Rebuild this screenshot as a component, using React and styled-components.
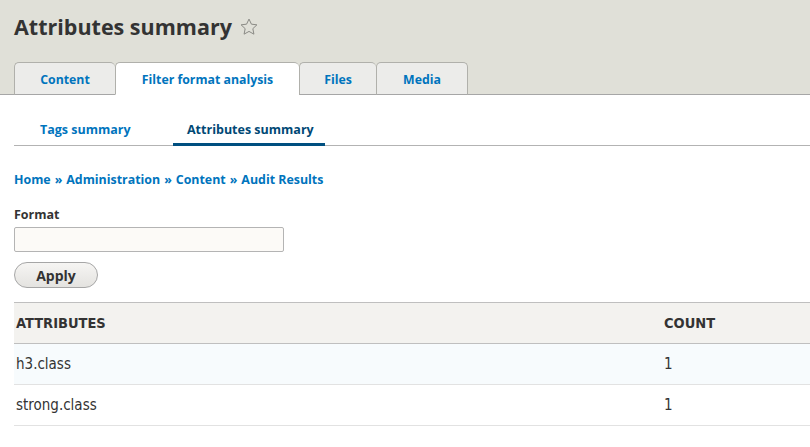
import React from 'react';
import styled, { createGlobalStyle } from 'styled-components';

const GlobalStyle = createGlobalStyle`
  html, body {
    margin: 0;
    padding: 0;
    background: #fff;
  }
  body {
    font-family: "Open Sans", "DejaVu Sans", sans-serif;
    color: #333;
    overflow: hidden;
  }
`;

const Header = styled.div`
  background: #e0e0d8;
  padding: 11px 14px 0;
  border-bottom: 1px solid #a6a6a6;
`;

const Title = styled.h1`
  margin: 0;
  font-size: 21.5px;
  font-weight: bold;
  color: #333;
  display: flex;
  align-items: center;
  gap: 7px;
  height: 30px;
`;

const Star = styled.svg`
  width: 20px;
  height: 20px;
  margin-top: 1px;
`;

const Tabs = styled.ul`
  display: flex;
  list-style: none;
  margin: 21px 0 0;
  padding: 0;
`;

const Tab = styled.li`
  box-sizing: border-box;
  width: ${(p) => p.w}px;
  height: 33px;
  margin-bottom: -1px;
  display: flex;
  align-items: center;
  justify-content: center;
  font-size: 12.3px;
  font-weight: bold;
  color: #0074bd;
  background: ${(p) => (p.active ? '#fff' : '#ececea')};
  border: 1px solid #b0b0ab;
  border-bottom: ${(p) => (p.active ? '1px solid #fff' : '1px solid #a6a6a6')};
  border-right: ${(p) => (p.last ? '1px solid #b0b0ab' : 'none')};
  border-radius: 5px 5px 0 0;
  padding-top: 1px;
`;

const Content = styled.div`
  padding: 0 0 0 14px;
`;

const SubTabs = styled.ul`
  display: flex;
  list-style: none;
  margin: 0;
  padding: 0;
  border-bottom: 1px solid #b3b3b3;
  height: 50px;
  align-items: flex-end;
`;

const SubTab = styled.li`
  box-sizing: border-box;
  width: ${(p) => p.w}px;
  height: 25px;
  margin-bottom: -1px;
  padding-left: ${(p) => p.pl}px;
  font-size: 12.5px;
  font-weight: bold;
  color: ${(p) => (p.active ? '#004875' : '#0074bd')};
  border-bottom: 3px solid ${(p) => (p.active ? '#004f80' : 'transparent')};
`;

const Breadcrumb = styled.div`
  margin-top: 25px;
  font-size: 12.4px;
  font-weight: bold;
  color: #0074bd;
  display: flex;
  gap: 4px;
`;

const Sep = styled.span`
  color: #0074bd;
`;

const Label = styled.label`
  display: block;
  margin-top: 18px;
  font-size: 12.5px;
  font-weight: bold;
  color: #333;
`;

const Input = styled.input`
  display: block;
  box-sizing: border-box;
  margin-top: 4px;
  width: 270px;
  height: 25px;
  border: 1px solid #b4b4b4;
  border-radius: 2px;
  background: #fcfaf7;
  outline: none;
`;

const Button = styled.button`
  display: block;
  box-sizing: border-box;
  margin-top: 10px;
  width: 84px;
  height: 26px;
  border: 1px solid #a6a6a6;
  border-radius: 20px;
  background: linear-gradient(#f6f5f3, #e4e3e0);
  font-family: "Open Sans", sans-serif;
  font-size: 14px;
  font-weight: bold;
  color: #333;
  padding: 0;
`;

const Table = styled.table`
  margin-top: 14px;
  width: 100%;
  border-collapse: collapse;
  font-family: "DejaVu Sans Condensed", "Liberation Sans Narrow", "DejaVu Sans", sans-serif;
  font-size: 15px;
  color: #333;
`;

const Th = styled.th`
  height: 40px;
  background: #f3f2ef;
  border-top: 1px solid #bfbfbf;
  border-bottom: 1px solid #bfbfbf;
  text-align: left;
  padding: 0 0 0 2px;
  font-weight: bold;
  font-size: 14.5px;
  text-transform: uppercase;
  width: ${(p) => p.w || 'auto'};
`;

const Row = styled.tr`
  background: ${(p) => (p.odd ? '#f7fbfd' : '#fff')};
`;

const Td = styled.td`
  height: 40px;
  border-bottom: 1px solid #e2e2e2;
  padding: 0 0 0 2px;
`;

const rows = [
  { name: 'h3.class', count: 1 },
  { name: 'strong.class', count: 1 },
];

export default function App() {
  return (
    <>
      <GlobalStyle />
      <Header>
        <Title>
          Attributes summary
          <Star viewBox="0 0 24 24" fill="none" stroke="#8a8a85" strokeWidth="1.2" strokeLinejoin="round">
            <path d="M12 2.5l2.9 6.1 6.6.8-4.9 4.6 1.3 6.6L12 17.3l-5.9 3.3 1.3-6.6-4.9-4.6 6.6-.8z" />
          </Star>
        </Title>
        <Tabs>
          <Tab w={101}>Content</Tab>
          <Tab w={184} active>Filter format analysis</Tab>
          <Tab w={77}>Files</Tab>
          <Tab w={92} last>Media</Tab>
        </Tabs>
      </Header>
      <Content>
        <SubTabs>
          <SubTab w={159} pl={26}>Tags summary</SubTab>
          <SubTab w={152} pl={14} active>Attributes summary</SubTab>
        </SubTabs>
        <Breadcrumb>
          <span>Home</span><Sep>»</Sep>
          <span>Administration</span><Sep>»</Sep>
          <span>Content</span><Sep>»</Sep>
          <span>Audit Results</span>
        </Breadcrumb>
        <Label>Format</Label>
        <Input type="text" />
        <Button>Apply</Button>
        <Table>
          <thead>
            <tr>
              <Th>Attributes</Th>
              <Th w="146px">Count</Th>
            </tr>
          </thead>
          <tbody>
            {rows.map((r, i) => (
              <Row key={r.name} odd={i % 2 === 0}>
                <Td>{r.name}</Td>
                <Td>{r.count}</Td>
              </Row>
            ))}
          </tbody>
        </Table>
      </Content>
    </>
  );
}
